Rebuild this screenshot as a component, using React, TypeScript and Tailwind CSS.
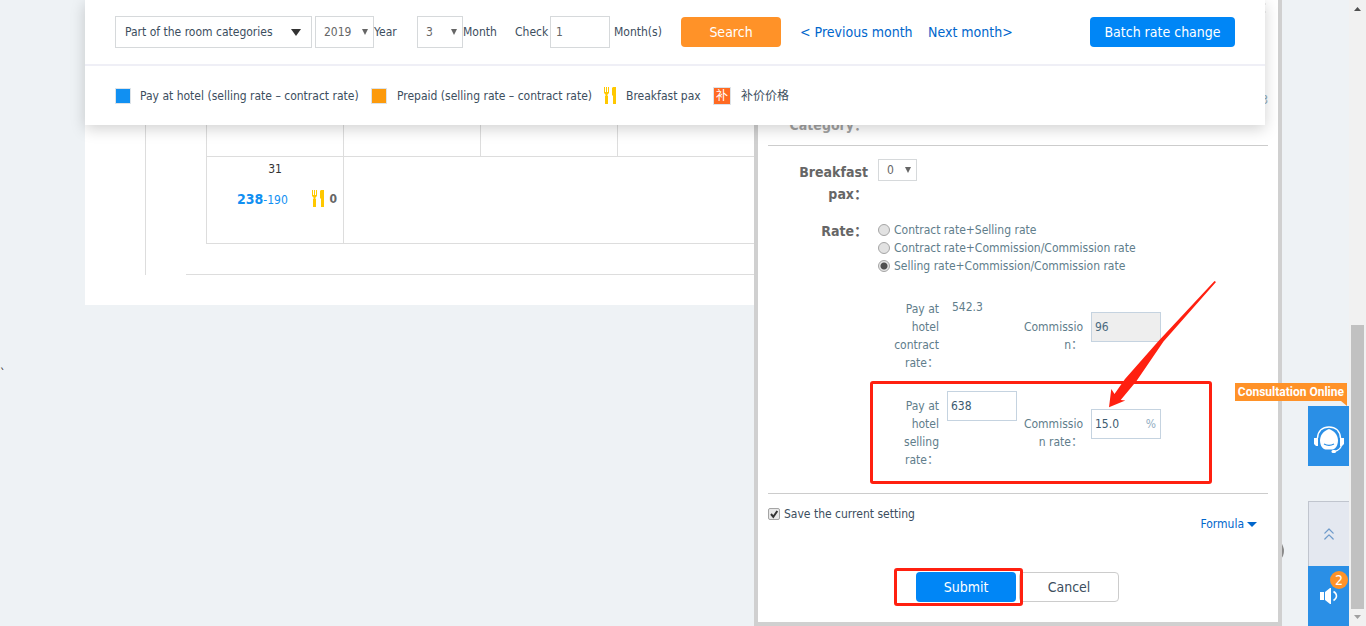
import type { ReactNode } from 'react';
import { ChevronsUp, X } from 'lucide-react';

const RATE_MODES = [
  'Contract rate+Selling rate',
  'Contract rate+Commission/Commission rate',
  'Selling rate+Commission/Commission rate',
];

function Caret({ className }: { className: string }) {
  return (
    <svg viewBox="0 0 10 8" preserveAspectRatio="none" className={className} aria-hidden="true">
      <path d="M0 0h10L5 8z" fill="currentColor" />
    </svg>
  );
}

function Cutlery() {
  return (
    <svg viewBox="0 0 14 17" className="w-[14px] h-[17px] shrink-0" fill="#ffc800" aria-hidden="true">
      <path d="M1 0h1v5h1V0h1v5h1V0h1v6L4.500 7.500V9H5v8H2V9h.5V7.500L1 6z" />
      <path d="M9 1l1-1h3v17h-3V9L9 8z" />
    </svg>
  );
}

type SelectProps = { id: string; label: string; value: string; className: string };

function Select({ id, label, value, className }: SelectProps) {
  return (
    <div className="grid items-center text-[#666]">
      <select
        id={id}
        aria-label={label}
        className={`[grid-area:1/1] appearance-none border border-[#d6d9db] bg-white pl-2 text-xs ${className}`}
      >
        <option>{value}</option>
      </select>
      <Caret className="[grid-area:1/1] justify-self-end mr-[6px] w-[6px] h-[6px] pointer-events-none" />
    </div>
  );
}

function Toolbar() {
  return (
    <header className="[grid-area:1/1] self-start sticky top-0 z-20 bg-white shadow-[0_4px_14px_rgba(0,0,0,0.18)] text-[#3c4e5e]">
      <div className="flex items-center h-[66px] pl-[30px] pr-[30px] border-b-2 border-[#efeff6]">
        <button className="flex items-center justify-between w-[197px] h-8 border border-[#d6d9db] pl-[9px] pr-[10px]">
          Part of the room categories
          <Caret className="w-[10px] h-[7px] text-[#333]" />
        </button>
        <div className="flex items-center ml-[3px]">
          <Select id="year" label="Year" value="2019" className="w-[59px] h-8" />
          <label htmlFor="year" className="w-[43px]">
            Year
          </label>
        </div>
        <div className="flex items-center">
          <Select id="month" label="Month" value="3" className="w-[46px] h-8" />
          <label htmlFor="month" className="w-[52px]">
            Month
          </label>
        </div>
        <label htmlFor="count" className="w-[35px]">
          Check
        </label>
        <input id="count" defaultValue="1" className="w-[60px] h-8 border border-[#d6d9db] px-[5px] text-[#666]" />
        <span className="w-[71px] pl-1">Month(s)</span>
        <button className="w-[100px] h-[30px] rounded bg-[#ff9228] text-white text-sm">Search</button>
        <a href="#prev" className="ml-[19px] w-[128px] text-sm text-[#0066cc] whitespace-nowrap">
          &lt; Previous month
        </a>
        <a href="#next" className="text-sm text-[#0066cc] whitespace-nowrap">
          Next month&gt;
        </a>
        <button className="ml-auto w-[145px] h-[30px] rounded bg-[#0086f6] text-white text-sm">
          Batch rate change
        </button>
      </div>
      <ul className="flex items-center h-[59px] pl-[30px] whitespace-nowrap">
        <li className="flex items-center gap-[9px] w-[256px]">
          <span className="size-4 border border-[#dde3e8] bg-[#1190f2]" />
          Pay at hotel (selling rate – contract rate)
        </li>
        <li className="flex items-center gap-[10px] w-[232px]">
          <span className="size-4 border border-[#dde3e8] bg-[#fc9a0c]" />
          Prepaid (selling rate – contract rate)
        </li>
        <li className="flex items-center gap-[9px] w-[110px]">
          <Cutlery />
          Breakfast pax
        </li>
        <li className="flex items-center gap-[10px]">
          <span className="flex items-center justify-center size-[18px] border border-[#dde3e8] bg-[#ff6a22] text-white">
            补
          </span>
          补价价格
        </li>
      </ul>
    </header>
  );
}

function RateCalendar() {
  return (
    <section className="[grid-area:1/1] self-start bg-white pt-[125px] pb-[30px] pl-[60px]">
      <div className="border-l border-[#ddd] pl-[40px]">
        <div className="border-b border-[#ddd] pb-[30px] pl-[20px] pr-[99px]">
          <table className="w-full table-fixed border-collapse">
            <tbody>
              <tr className="h-[31px]">
                {[24, 25, 26, 27, 28, 29, 30].map((day) => (
                  <td key={day} className="border border-t-0 border-[#ddd]" />
                ))}
              </tr>
              <tr className="h-[87px]">
                <td className="border border-[#ddd] align-top p-0">
                  <div className="pt-1 text-center text-[#333]">31</div>
                  <div className="flex items-center justify-between pt-[12px] pl-[30px] pr-[6px]">
                    <span className="text-[#1190f2]">
                      <b className="text-sm">238</b>-190
                    </span>
                    <span className="flex items-center gap-1 font-bold text-[#666]">
                      <Cutlery />0
                    </span>
                  </div>
                </td>
                <td colSpan={6} className="border border-[#ddd]" />
              </tr>
            </tbody>
          </table>
        </div>
      </div>
    </section>
  );
}

function RowLabel({ htmlFor, children }: { htmlFor?: string; children: ReactNode }) {
  return (
    <label htmlFor={htmlFor} className="block w-[100px] pt-[2px] text-right text-sm leading-[22px] font-bold text-[#666]">
      {children}
    </label>
  );
}

type RateRowProps = {
  id: string;
  label: string;
  value: ReactNode;
  sideLabel: string;
  side: ReactNode;
};

function RateRow({ id, label, value, sideLabel, side }: RateRowProps) {
  return (
    <div className="flex items-start pl-[123px]">
      <label htmlFor={`${id}-value`} className="w-[48px] mr-2 pt-[6px] text-right">
        {label}
      </label>
      <div className="w-[76px]">{value}</div>
      <label htmlFor={`${id}-side`} className="w-[60px] mr-2 pt-6 text-right break-all">
        {sideLabel}
      </label>
      <div className="pt-[18px]">{side}</div>
    </div>
  );
}

function RateDialog() {
  return (
    <form className="[grid-area:1/1] relative z-10 justify-self-end -mr-[17px] w-[528px] border-4 border-t-0 border-[#d0d0d0] bg-white px-[10px] pb-5 text-[#607d8b] leading-[18px]">
      <div className="flex justify-end h-[91px]">
        <button type="button" aria-label="Close" className="h-4">
          <X className="size-4 text-[#999]" strokeWidth={4} />
        </button>
      </div>
      <div className="h-[20px] text-right text-[#8fabba]">3</div>
      <div className="h-[34px] pt-[1px] opacity-60">
        <RowLabel>Category：</RowLabel>
      </div>
      <div className="flex items-start gap-[10px] border-t border-[#ccc] pt-[13px]">
        <RowLabel htmlFor="pax">
          Breakfast
          <br />
          pax：
        </RowLabel>
        <Select id="pax" label="Breakfast pax" value="0" className="w-[39px] h-[22px]" />
      </div>
      <fieldset className="flex gap-[10px] pt-[13px]">
        <RowLabel>Rate：</RowLabel>
        <div className="pt-[3px]">
          {RATE_MODES.map((mode, i) => (
            <label key={mode} className="flex items-center gap-1">
              <input
                type="radio"
                name="mode"
                defaultChecked={i === 2}
                className="appearance-none size-3 rounded-full border border-[#a5a5a5] bg-[#e2e2e2] checked:bg-[radial-gradient(circle,#505050_3px,#e6e6e6_4px)]"
              />
              {mode}
            </label>
          ))}
        </div>
      </fieldset>
      <div className="relative flex flex-col gap-[19px] pt-[19px] pb-6">
        <RateRow
          id="contract"
          label="Pay at hotel contract rate："
          value={
            <output id="contract-value" className="block pl-[5px] leading-[26px]">
              542.3
            </output>
          }
          sideLabel="Commission："
          side={
            <input
              id="contract-side"
              defaultValue="96"
              disabled
              className="block w-[70px] h-[30px] border border-[#c5d3e0] bg-[#eee] px-[3px] text-[#4a6a80]"
            />
          }
        />
        <RateRow
          id="selling"
          label="Pay at hotel selling rate："
          value={
            <input
              id="selling-value"
              defaultValue="638"
              className="block w-[70px] h-[30px] border border-[#c5d3e0] px-[3px] text-[#3c5a70]"
            />
          }
          sideLabel="Commission rate："
          side={
            <div className="flex items-center w-[70px] h-[30px] border border-[#c5d3e0] pl-[3px] pr-1">
              <input id="selling-side" defaultValue="15.0" className="min-w-0 flex-1 text-[#3c5a70]" />
              <span className="text-[#92adc2]">%</span>
            </div>
          }
        />
        <div className="absolute left-[102px] right-[56px] bottom-[9px] h-[103px] rounded-[3px] border-3 border-[#ff2010] pointer-events-none" />
        <svg
          viewBox="0 0 110 128"
          className="absolute left-[340px] bottom-[85px] w-[110px] h-[128px] pointer-events-none"
          aria-hidden="true"
        >
          <path d="M106.500 1L50.500 61 17 99 6.500 114 3.300 109 1 127.300 17.300 120.500 12.700 120 28.500 101 55.500 61.500 108 2z" fill="#ff2010" />
        </svg>
      </div>
      <div className="flex items-start justify-between h-[79px] border-t border-[#ccc] pt-[11px] pr-[11px]">
        <label className="flex items-center gap-1 text-[#3c4e5e]">
          <input type="checkbox" defaultChecked className="peer sr-only" />
          <svg viewBox="0 0 12 12" className="size-3" aria-hidden="true">
            <rect x=".5" y=".5" width="11" height="11" rx="1.500" fill="#e8e8e8" stroke="#a5a5a5" />
            <path d="M3 6l2.300 2.800L9.300 3" fill="none" stroke="#333" strokeWidth="2" />
          </svg>
          Save the current setting
        </label>
        <a href="#formula" className="flex items-center gap-[3px] pt-[10px] text-[#0066cc]">
          Formula
          <Caret className="w-[10px] h-[5px]" />
        </a>
      </div>
      <div className="relative flex justify-center gap-[3px] pr-[1px]">
        <button className="w-[100px] h-[30px] rounded bg-[#0086f6] text-white text-sm">Submit</button>
        <button type="button" className="w-[100px] h-[30px] rounded border border-[#ccc] text-sm text-[#3c4e5e]">
          Cancel
        </button>
        <div className="absolute -top-1 left-[126px] w-[129px] h-[38px] rounded-[3px] border-3 border-[#ff2010] pointer-events-none" />
      </div>
    </form>
  );
}

function SideWidgets() {
  return (
    <div className="absolute bottom-0 right-[17px] z-30 flex flex-col items-end text-white">
      <span className="mr-[2px] px-[3px] h-[18px] leading-[18px] bg-[#ff9228] text-xs font-bold whitespace-nowrap font-['Roboto',sans-serif]">
        Consultation Online
      </span>
      <svg viewBox="0 0 6 5" className="mr-[2px] w-[6px] h-[5px]" aria-hidden="true">
        <path d="M0 0h6v5z" fill="#ff9228" />
      </svg>
      <button aria-label="Consultation Online" className="flex items-center justify-center w-[41px] h-[60px] pt-2 bg-[#2a8fe6]">
        <svg viewBox="0 0 30 28" className="w-[30px] h-[28px]" aria-hidden="true">
          <path d="M3.500 12C4 5 8.500 1 15 1s11 4 11.500 11" fill="none" stroke="#fff" strokeWidth="1.500" />
          <path d="M15 3c5 2 8.500 5 9 11 0 6-3 9.500-5.500 9.500h-7C9 23.500 6 20 6 14c.5-6 4-9 9-11z" fill="#fff" />
          <path d="M0 12h4v8H2l-2-2zM26 12h4v6l-2 2h-2z" fill="#fff" />
          <path d="M27.500 19c-.5 3-3 5.500-7 6.500" fill="none" stroke="#fff" strokeWidth="1.500" />
          <rect x="17.500" y="24" width="4.500" height="3" rx="1.500" fill="#fff" />
          <path d="M10 18c3 1.600 7 1.600 10 0" fill="none" stroke="#2a8fe6" strokeWidth="1.300" />
        </svg>
      </button>
      <button
        aria-label="Back to top"
        className="flex items-center justify-center mt-[35px] w-[41px] h-[65px] border-l border-t border-[#c0c5ce] bg-[#e4e8f0] text-[#6f9bcb]"
      >
        <ChevronsUp className="size-5" strokeWidth={1.5} />
      </button>
      <button aria-label="Notices" className="relative flex items-center justify-center w-[41px] h-[60px] bg-[#2a8fe6]">
        <svg viewBox="0 0 18 16" className="w-[18px] h-[16px]" aria-hidden="true">
          <path d="M0 4h4v8H0zM5 4l5-4h1v16h-1l-5-4z" fill="#fff" />
          <path d="M13.500 3.500c4 2.500 4 6.500 0 9" fill="none" stroke="#fff" strokeWidth="1.500" />
        </svg>
        <span className="absolute top-[5px] right-[1px] flex items-center justify-center size-[18px] rounded-full bg-[#ff9228] text-sm leading-none">
          2
        </span>
      </button>
    </div>
  );
}

function ScrollRail() {
  return (
    <div className="flex flex-col items-center justify-between w-[17px] pt-[7px] pb-[7px] bg-[#f1f1f1]" aria-hidden="true">
      <Caret className="w-[7px] h-[4px] rotate-180 text-[#505050]" />
      <div className="flex-1 flex flex-col justify-end pb-[6px]">
        <div className="w-[13px] h-[284px] bg-[#c1c1c1]" />
      </div>
      <Caret className="w-[7px] h-[4px] text-[#a0a0a0]" />
    </div>
  );
}

export default function App() {
  return (
    <div className="relative flex min-h-screen bg-[#eef2f5] text-xs font-['DejaVu_Sans_Condensed','Noto_Sans','Noto_Sans_CJK_SC',sans-serif]">
      <div className="w-[85px] pt-[366px] text-[#333]">`</div>
      <main className="relative grid flex-1 mr-[84px]">
        <RateCalendar />
        <div className="absolute top-[539px] -right-[19px] size-6 rounded-full bg-[#8a8a8a]" />
        <RateDialog />
        <Toolbar />
      </main>
      <ScrollRail />
      <SideWidgets />
    </div>
  );
}
